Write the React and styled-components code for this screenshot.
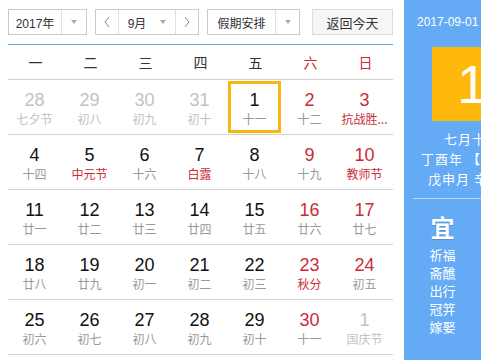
import styled, { createGlobalStyle } from "styled-components"

const GlobalStyle = createGlobalStyle`
    html, body {
        margin: 0;
        padding: 0;
        background: #fff;
        overflow: hidden;
    }
    body {
        font-family: "Liberation Sans", "Noto Sans CJK SC", sans-serif;
    }
`

const RED = "#cc2b36"

const Page = styled.div`
    display: flex;
    width: 560px;
    height: 360px;
`

const Main = styled.div`
    flex: 0 0 385px;
    padding: 9px 11px 0 8px;
`

const Toolbar = styled.div`
    display: flex;
    align-items: stretch;
    height: 26px;
    gap: 8px;
`

const SelectBox = styled.div`
    display: flex;
    width: ${(p) => p.$width}px;
    box-sizing: border-box;
    border: 1px solid #c9c9c9;
    background: #fff;
    font-size: 12px;
    color: #333;
`

const SelectText = styled.div`
    flex: 1;
    display: flex;
    align-items: center;
    justify-content: center;
    gap: 14px;
`

const ArrowCell = styled.div`
    flex: 0 0 ${(p) => p.$width || 23}px;
    display: flex;
    align-items: center;
    justify-content: center;
    border-left: 1px solid #e1e1e1;
    border-right: ${(p) => (p.$right ? "1px solid #e1e1e1" : "none")};
    color: #888;
`

const Caret = styled.span`
    width: 0;
    height: 0;
    border-left: 3px solid transparent;
    border-right: 3px solid transparent;
    border-top: 4px solid #aaa;
`

const ReturnButton = styled.div`
    margin-left: auto;
    width: 81px;
    box-sizing: border-box;
    border: 1px solid #dcdcdc;
    background: #f6f6f6;
    display: flex;
    align-items: center;
    justify-content: center;
    font-size: 13px;
    color: #333;
`

const BlueLine = styled.div`
    height: 1px;
    background: #62a6dc;
    margin-top: 9px;
`

const Grid = styled.div`
    display: grid;
    grid-template-columns: repeat(7, 55px);
`

const WeekHead = styled.div`
    height: 34px;
    border-bottom: 1px solid #d2d2d2;
    display: flex;
    align-items: center;
    justify-content: center;
    font-size: 14px;
    color: ${(p) => (p.$weekend ? RED : "#333")};
    font-family: "Noto Sans CJK SC", sans-serif;
`

const CellWrap = styled.div`
    height: 54px;
    border-bottom: 1px solid #d2d2d2;
    display: flex;
    align-items: flex-start;
`

const DayBox = styled.div`
    margin-top: 1px;
    width: 53px;
    height: 52px;
    box-sizing: border-box;
    border: 3px solid ${(p) => (p.$selected ? "#f6b713" : "transparent")};
    display: flex;
    flex-direction: column;
    align-items: center;
    padding-top: 6px;
`

const DayNum = styled.div`
    font-size: 18px;
    line-height: 20px;
    color: ${(p) => (p.$other ? "#c2c2c2" : p.$weekend ? RED : "#111")};
`

const Lunar = styled.div`
    margin-top: 1px;
    font-size: 12px;
    line-height: 16px;
    white-space: nowrap;
    font-family: "Noto Sans CJK SC", sans-serif;
    color: ${(p) => (p.$other ? "#c2c2c2" : p.$fest ? RED : "#999")};
`

const Side = styled.div`
    flex: 0 0 136px;
    background: #64aaf5;
    color: #fff;
    padding-top: 14px;
    display: flex;
    flex-direction: column;
    align-items: center;
`

const SideDate = styled.div`
    align-self: flex-start;
    padding-left: 13px;
    font-size: 12px;
    line-height: 16px;
`

const BigDay = styled.div`
    margin-top: 17px;
    width: 80px;
    height: 74px;
    background: #ffb80c;
    display: flex;
    align-items: center;
    justify-content: center;
    font-size: 54px;
    color: #fff;
`

const LunarInfo = styled.div`
    margin-top: 8px;
    text-align: center;
    font-size: 13px;
    line-height: 20px;
    letter-spacing: 1px;
    font-family: "Noto Sans CJK SC", sans-serif;
`

const SideRule = styled.div`
    align-self: stretch;
    margin: 9px 9px 0;
    height: 1px;
    background: rgba(255, 255, 255, 0.55);
`

const Advice = styled.div`
    align-self: stretch;
    margin: 14px 9px 0;
    display: grid;
    grid-template-columns: 1fr 1fr;
    font-family: "Noto Sans CJK SC", sans-serif;
`

const AdviceCol = styled.div`
    display: flex;
    flex-direction: column;
    align-items: center;
`

const AdviceTitle = styled.div`
    font-size: 24px;
    line-height: 28px;
    font-weight: bold;
    margin-bottom: 5px;
    text-shadow: 0 1px 1px rgba(0, 0, 0, 0.15);
`

const AdviceItem = styled.div`
    font-size: 13px;
    line-height: 18px;
`

function Chevron({ dir }) {
    const pts = dir === "left" ? "6,1 2,6 6,11" : "2,1 6,6 2,11"
    return (
        <svg width="8" height="12" viewBox="0 0 8 12">
            <polyline points={pts} fill="none" stroke="#888" strokeWidth="1" />
        </svg>
    )
}

const weekdays = ["一", "二", "三", "四", "五", "六", "日"]

const days = [
    { d: 28, l: "七夕节", other: true },
    { d: 29, l: "初八", other: true },
    { d: 30, l: "初九", other: true },
    { d: 31, l: "初十", other: true },
    { d: 1, l: "十一", sel: true },
    { d: 2, l: "十二" },
    { d: 3, l: "抗战胜...", fest: true },
    { d: 4, l: "十四" },
    { d: 5, l: "中元节", fest: true },
    { d: 6, l: "十六" },
    { d: 7, l: "白露", fest: true },
    { d: 8, l: "十八" },
    { d: 9, l: "十九" },
    { d: 10, l: "教师节", fest: true },
    { d: 11, l: "廿一" },
    { d: 12, l: "廿二" },
    { d: 13, l: "廿三" },
    { d: 14, l: "廿四" },
    { d: 15, l: "廿五" },
    { d: 16, l: "廿六" },
    { d: 17, l: "廿七" },
    { d: 18, l: "廿八" },
    { d: 19, l: "廿九" },
    { d: 20, l: "初一" },
    { d: 21, l: "初二" },
    { d: 22, l: "初三" },
    { d: 23, l: "秋分", fest: true },
    { d: 24, l: "初五" },
    { d: 25, l: "初六" },
    { d: 26, l: "初七" },
    { d: 27, l: "初八" },
    { d: 28, l: "初九" },
    { d: 29, l: "初十" },
    { d: 30, l: "十一" },
    { d: 1, l: "国庆节", other: true },
]

const good = ["祈福", "斋醮", "出行", "冠笄", "嫁娶"]
const bad = ["动土", "破土", "安葬", "行丧", "伐木"]

export default function App() {
    return (
        <Page>
            <GlobalStyle />
            <Main>
                <Toolbar>
                    <SelectBox $width={79}>
                        <SelectText>2017年</SelectText>
                        <ArrowCell $width={24}><Caret /></ArrowCell>
                    </SelectBox>
                    <SelectBox $width={104}>
                        <ArrowCell $width={22} style={{ borderLeft: "none" }} $right><Chevron dir="left" /></ArrowCell>
                        <SelectText>9月<Caret /></SelectText>
                        <ArrowCell $width={22}><Chevron dir="right" /></ArrowCell>
                    </SelectBox>
                    <SelectBox $width={93}>
                        <SelectText>假期安排</SelectText>
                        <ArrowCell $width={23}><Caret /></ArrowCell>
                    </SelectBox>
                    <ReturnButton>返回今天</ReturnButton>
                </Toolbar>
                <BlueLine />
                <Grid>
                    {weekdays.map((w, i) => (
                        <WeekHead key={w} $weekend={i >= 5}>{w}</WeekHead>
                    ))}
                    {days.map((day, i) => {
                        const weekend = i % 7 >= 5
                        return (
                            <CellWrap key={i}>
                                <DayBox $selected={day.sel}>
                                    <DayNum $other={day.other} $weekend={weekend}>{day.d}</DayNum>
                                    <Lunar $other={day.other} $fest={day.fest}>{day.l}</Lunar>
                                </DayBox>
                            </CellWrap>
                        )
                    })}
                </Grid>
            </Main>
            <Side>
                <SideDate>2017-09-01 星期五</SideDate>
                <BigDay>1</BigDay>
                <LunarInfo>
                    <div>七月十一</div>
                    <div>丁酉年 【鸡年】</div>
                    <div>戊申月 辛丑日</div>
                </LunarInfo>
                <SideRule />
                <Advice>
                    <AdviceCol>
                        <AdviceTitle>宜</AdviceTitle>
                        {good.map((g) => <AdviceItem key={g}>{g}</AdviceItem>)}
                    </AdviceCol>
                    <AdviceCol>
                        <AdviceTitle>忌</AdviceTitle>
                        {bad.map((g) => <AdviceItem key={g}>{g}</AdviceItem>)}
                    </AdviceCol>
                </Advice>
            </Side>
        </Page>
    )
}
